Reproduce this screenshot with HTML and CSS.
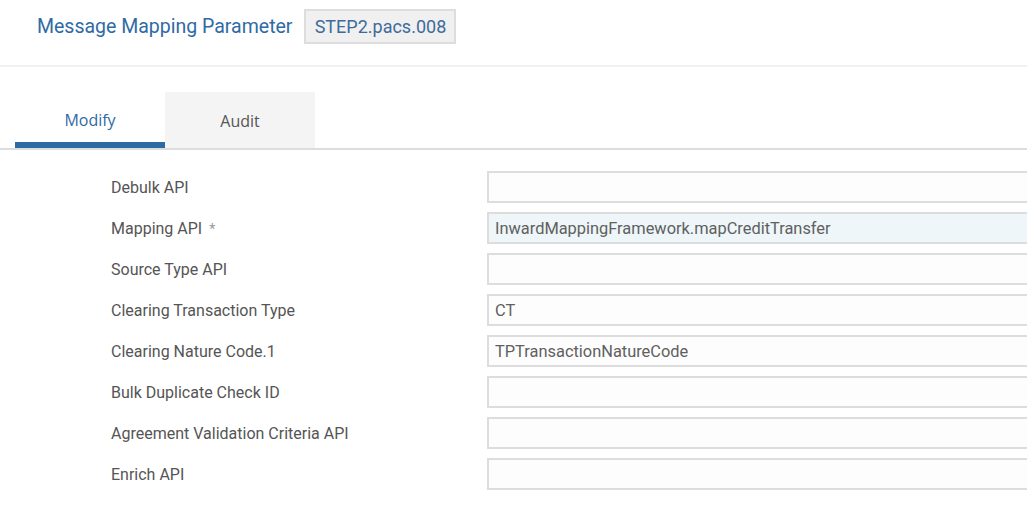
FILE: index.html
```html
<!DOCTYPE html>
<html>
<head>
<meta charset="utf-8">
<link rel="stylesheet" href="styles.css">
</head>
<body>
<header class="page-head">
  <h1 class="title">Message Mapping Parameter</h1>
  <span class="badge">STEP2.pacs.008</span>
</header>
<nav class="tabs">
  <div class="tab active">Modify</div>
  <div class="tab">Audit</div>
</nav>
<form class="form">
  <div class="row"><label class="lbl">Debulk API</label><div class="field"></div></div>
  <div class="row"><label class="lbl">Mapping API <span class="req">*</span></label><div class="field filled">InwardMappingFramework.mapCreditTransfer</div></div>
  <div class="row"><label class="lbl">Source Type API</label><div class="field"></div></div>
  <div class="row"><label class="lbl">Clearing Transaction Type</label><div class="field">CT</div></div>
  <div class="row"><label class="lbl">Clearing Nature Code.1</label><div class="field">TPTransactionNatureCode</div></div>
  <div class="row"><label class="lbl">Bulk Duplicate Check ID</label><div class="field"></div></div>
  <div class="row"><label class="lbl">Agreement Validation Criteria API</label><div class="field"></div></div>
  <div class="row"><label class="lbl">Enrich API</label><div class="field"></div></div>
</form>
</body>
</html>
```
FILE: styles.css
```css
html, body { margin: 0; padding: 0; background: #fff; }
body { font-family: Roboto, "Liberation Sans", sans-serif; overflow: hidden; width: 1027px; height: 505px; }

.page-head {
  display: flex;
  align-items: center;
  height: 65px;
  padding-left: 37px;
  border-bottom: 2px solid #f1f1f1;
  box-sizing: content-box;
}
.title {
  margin: 0;
  font-weight: 400;
  font-size: 19.5px;
  color: #2f6aa4;
  margin-top: -12px;
}
.badge {
  margin-left: 12px;
  margin-top: -13px;
  background: #f0f0f0;
  border: 2px solid #dddddd;
  padding: 0 8px;
  height: 31px;
  line-height: 31px;
  font-size: 18px;
  color: #3e6b9c;
  width: 132px;
  text-align: center;
}

.tabs {
  display: flex;
  margin-top: 25px;
  padding-left: 15px;
  border-bottom: 2px solid #dddddd;
}
.tab {
  width: 150px;
  height: 56px;
  box-sizing: border-box;
  display: flex;
  align-items: center;
  justify-content: center;
  padding-top: 1px;
  font-family: "Open Sans", "Noto Sans", sans-serif;
  font-size: 16px;
  color: #555;
  background: #f4f4f4;
}
.tab.active {
  background: #fff;
  color: #2f6aa4;
  border-bottom: 6px solid #2d6aa1;
  padding-top: 6px;
}

.form {
  display: flex;
  flex-direction: column;
  gap: 9px;
  margin-top: 21px;
}
.row {
  display: flex;
  align-items: center;
  height: 32px;
}
.lbl {
  width: 376px;
  padding-left: 111px;
  font-size: 16px;
  color: #555;
  flex: none;
}
.req { color: #999; font-size: 14px; margin-left: 3px; }
.field {
  flex: none;
  width: 560px;
  height: 32px;
  box-sizing: border-box;
  border: 2px solid #dddddd;
  background: #fdfdfd;
  padding-left: 6px;
  font-size: 16.4px;
  color: #606060;
  line-height: 29px;
}
.field.filled { background: #eef6f9; }
```
